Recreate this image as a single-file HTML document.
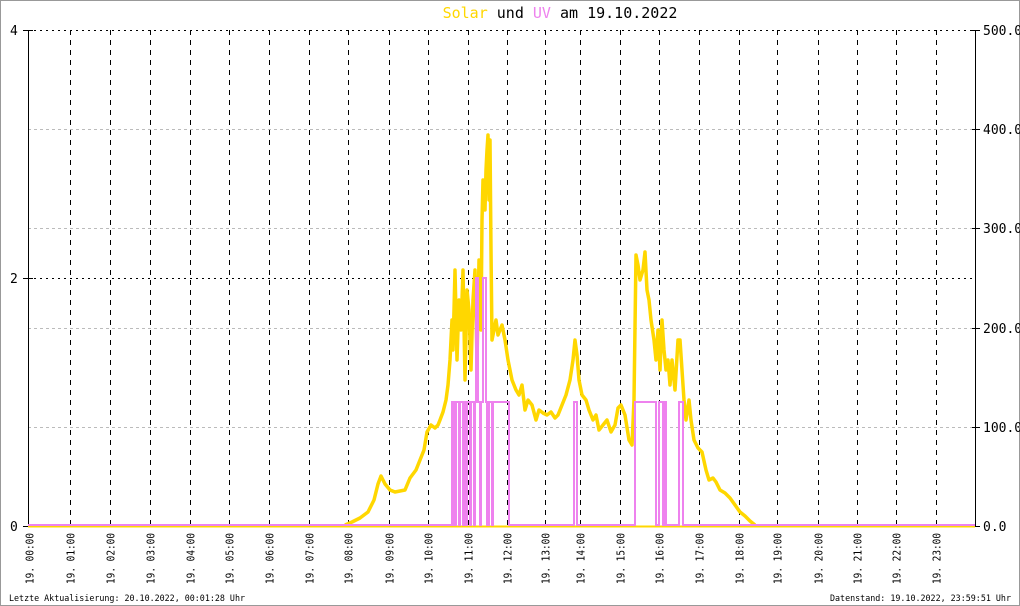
<!DOCTYPE html>
<html><head><meta charset="utf-8"><style>
html,body{margin:0;padding:0;background:#fff}
svg{display:block}
text{font-family:"DejaVu Sans Mono","Liberation Mono",monospace}
</style></head><body>
<svg width="1020" height="606" viewBox="0 0 1020 606" xmlns="http://www.w3.org/2000/svg">
<rect x="0.5" y="0.5" width="1019" height="605" fill="#fff" stroke="#999"/>
<text x="560" y="18" font-size="15" text-anchor="middle" fill="#000"><tspan fill="#ffd700">Solar</tspan> und <tspan fill="#ee82ee">UV</tspan> am 19.10.2022</text>
<g stroke="#bbb" stroke-dasharray="3,3" stroke-width="1">
<line x1="28" y1="129.5" x2="975" y2="129.5"/><line x1="28" y1="228.5" x2="975" y2="228.5"/>
<line x1="28" y1="328.5" x2="975" y2="328.5"/><line x1="28" y1="427.5" x2="975" y2="427.5"/>
</g>
<g stroke="#000" stroke-dasharray="2,4" stroke-width="1">
<line x1="28" y1="30.5" x2="975" y2="30.5"/><line x1="28" y1="278.5" x2="975" y2="278.5"/>
</g>
<g stroke="#000" stroke-dasharray="5,5" stroke-width="1" id="vl"></g>
<g id="xl" font-size="11" fill="#000"></g>
<line x1="28.5" y1="30" x2="28.5" y2="526" stroke="#000"/>
<line x1="975.5" y1="30" x2="975.5" y2="526" stroke="#000"/>
<g stroke="#000"><line x1="23" y1="30.5" x2="33" y2="30.5"/><line x1="23" y1="278.5" x2="33" y2="278.5"/><line x1="23" y1="526.5" x2="33" y2="526.5"/>
<line x1="972" y1="30.5" x2="980" y2="30.5"/><line x1="972" y1="129.5" x2="980" y2="129.5"/><line x1="972" y1="228.5" x2="980" y2="228.5"/><line x1="972" y1="328.5" x2="980" y2="328.5"/><line x1="972" y1="427.5" x2="980" y2="427.5"/><line x1="972" y1="526.5" x2="980" y2="526.5"/></g>
<g font-size="13" fill="#000">
<text x="10" y="35">4</text><text x="10" y="283">2</text><text x="10" y="531">0</text>
<text x="983" y="35">500.0</text><text x="983" y="134">400.0</text><text x="983" y="233">300.0</text><text x="983" y="333">200.0</text><text x="983" y="432">100.0</text><text x="983" y="531">0.0</text>
</g>
<line x1="28" y1="526.5" x2="975" y2="526.5" stroke="#ffd700" stroke-width="2"/>
<polyline fill="none" stroke="#ffd700" stroke-width="3.5" stroke-linejoin="round" points="345,525 352,522 360,518 368,512 374,500 378,484 381,476 385,484 390,490 395,492 400,491 405,490 410,478 416,470 420,460 424,450 427,432 431,425 435,428 438,425 440,420 443,412 446,400 448,385 450,360 452,320 453,350 455,270 457,360 459,300 461,330 463,270 465,380 467,290 469,310 471,370 473,300 475,270 477,360 479,260 481,330 482,220 483,180 485,210 486,170 487,150 488,135 489,200 490,140 491,250 492,340 494,330 496,320 498,335 500,330 502,325 505,340 508,360 512,380 516,390 519,395 522,385 525,410 528,400 532,405 536,420 539,410 543,413 547,415 551,412 555,418 558,415 562,405 566,395 570,380 573,360 575,340 577,355 579,380 582,395 586,400 589,410 593,420 596,415 599,430 603,425 607,420 611,432 615,425 618,408 621,405 625,415 629,440 632,445 634,400 636,255 638,265 640,280 643,270 645,252 647,290 649,300 651,320 654,340 656,360 658,330 660,370 662,320 664,350 666,370 668,360 670,385 672,360 675,390 678,340 680,340 682,370 684,400 686,420 689,400 691,420 694,440 698,448 702,452 706,470 709,480 713,478 716,482 720,490 725,493 730,498 735,505 740,512 745,516 750,521 755,525"/>
<path fill="none" stroke="#ee82ee" stroke-width="2" d="M28,525 H452 V402 H454 V525 H456 V402 H459 V525 H460 V402 H463 V525 H464 V402 H466 V525 H467 V402 H470 V525 H471 V402 H474 V525 H475 V402 H476 V278 H478 V402 H480 V525 H481 V402 H483 V278 H486 V402 H487 V525 H489 V402 H492 V525 H493 V402 H509 V525 H574 V402 H577 V525 H635 V402 H656 V525 H659 V402 H663 V525 H664 V402 H666 V525 H679 V402 H683 V525 H975"/>
<g font-size="8.4" fill="#000"><text x="9" y="601" textLength="236" lengthAdjust="spacingAndGlyphs">Letzte Aktualisierung: 20.10.2022, 00:01:28 Uhr</text><text x="830" y="601" textLength="181" lengthAdjust="spacingAndGlyphs">Datenstand: 19.10.2022, 23:59:51 Uhr</text></g>
<script>
var vl=document.getElementById('vl'),xl=document.getElementById('xl'),ns='http://www.w3.org/2000/svg';
var X=[29,70,110,150,190,229,269,309,348,389,428,468,507,545,580,620,659,699,739,777,818,857,896,936];
for(var h=0;h<24;h++){var x=X[h]+0.5;
if(h>0){var l=document.createElementNS(ns,'line');l.setAttribute('x1',x);l.setAttribute('x2',x);l.setAttribute('y1',30);l.setAttribute('y2',526);vl.appendChild(l);}
var t=document.createElementNS(ns,'text');t.setAttribute('transform','translate('+(x+4)+',584) rotate(-90)');t.setAttribute('textLength','51');t.setAttribute('lengthAdjust','spacingAndGlyphs');t.textContent='19. '+(h<10?'0':'')+h+':00';xl.appendChild(t);}
</script>
</svg>
</body></html>
